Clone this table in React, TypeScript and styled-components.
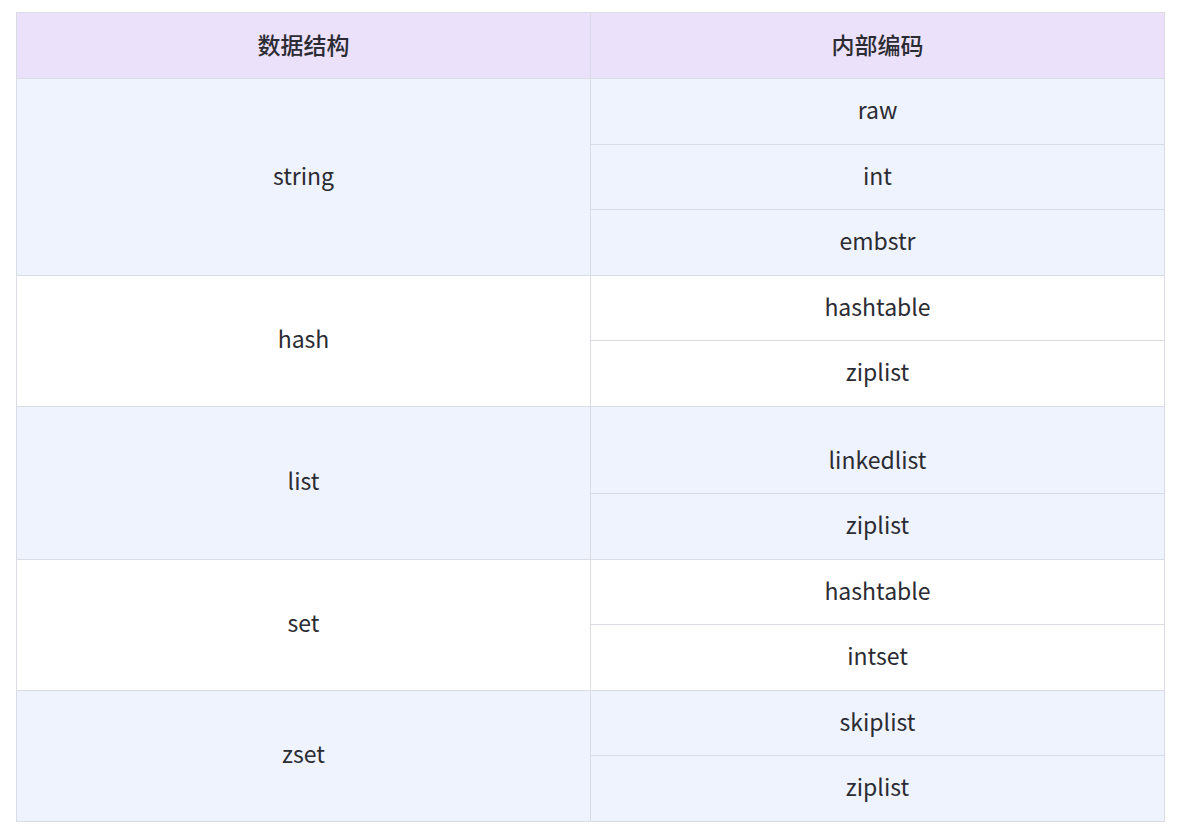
import React from "react";
import styled, { createGlobalStyle } from "styled-components";

const GlobalStyle = createGlobalStyle`
  html, body { margin: 0; padding: 0; background: #ffffff; }
  body {
    font-family: "Noto Sans CJK SC", "Noto Sans", sans-serif;
    color: #2b2b33;
  }
`;

const Page = styled.div`
  padding: 12px 14px 12px 16px;
`;

const Table = styled.table`
  width: 1149px;
  border-collapse: collapse;
  table-layout: fixed;
  font-size: 23px;
`;

const HeadCell = styled.th`
  height: 66px;
  padding: 0 0 4px 0;
  box-sizing: border-box;
  background: #ebe1fa;
  border: 1px solid #dadbe3;
  font-weight: 500;
  text-align: center;
  vertical-align: middle;
`;

const Cell = styled.td<{ $striped: boolean; $extraTop?: number }>`
  height: ${(p) => 65.5 + (p.$extraTop ?? 0)}px;
  padding: ${(p) => p.$extraTop ?? 0}px 0 4px 0;
  box-sizing: border-box;
  background: ${(p) => (p.$striped ? "#eff3fe" : "#ffffff")};
  border: 1px solid #dadbe3;
  font-weight: 400;
  text-align: center;
  vertical-align: middle;
  line-height: 1.4;
`;

type Group = { name: string; encodings: { label: string; extraTop?: number }[] };

const groups: Group[] = [
  { name: "string", encodings: [{ label: "raw" }, { label: "int" }, { label: "embstr" }] },
  { name: "hash", encodings: [{ label: "hashtable" }, { label: "ziplist" }] },
  { name: "list", encodings: [{ label: "linkedlist", extraTop: 22 }, { label: "ziplist" }] },
  { name: "set", encodings: [{ label: "hashtable" }, { label: "intset" }] },
  { name: "zset", encodings: [{ label: "skiplist" }, { label: "ziplist" }] },
];

export default function App() {
  return (
    <>
      <GlobalStyle />
      <Page>
        <Table>
          <thead>
            <tr>
              <HeadCell>数据结构</HeadCell>
              <HeadCell>内部编码</HeadCell>
            </tr>
          </thead>
          <tbody>
            {groups.map((g, gi) =>
              g.encodings.map((e, ei) => (
                <tr key={`${g.name}-${e.label}-${ei}`}>
                  {ei === 0 && (
                    <Cell $striped={gi % 2 === 0} rowSpan={g.encodings.length}>
                      {g.name}
                    </Cell>
                  )}
                  <Cell $striped={gi % 2 === 0} $extraTop={e.extraTop}>
                    {e.label}
                  </Cell>
                </tr>
              ))
            )}
          </tbody>
        </Table>
      </Page>
    </>
  );
}
